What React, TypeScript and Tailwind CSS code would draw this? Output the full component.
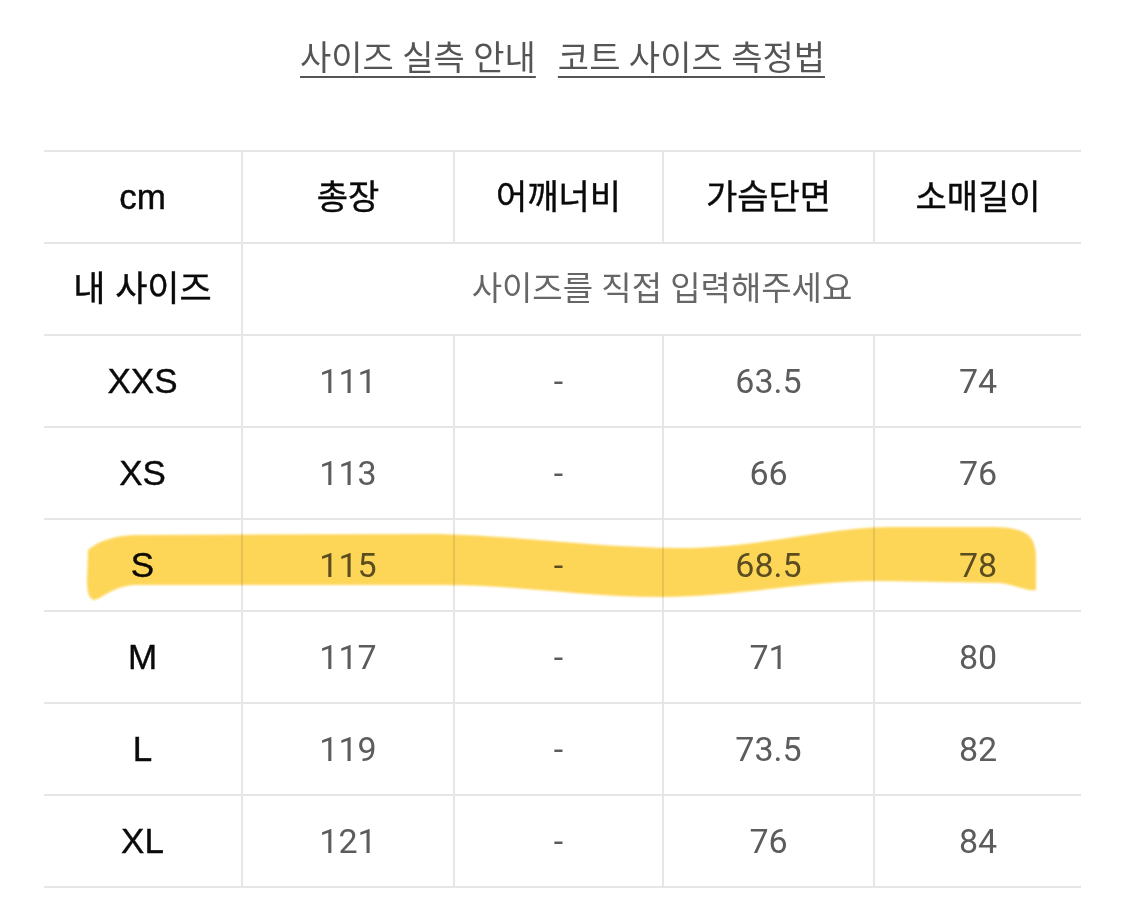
const rows = [
  { size: "XXS", values: ["111", "-", "63.5", "74"] },
  { size: "XS", values: ["113", "-", "66", "76"] },
  { size: "S", values: ["115", "-", "68.5", "78"] },
  { size: "M", values: ["117", "-", "71", "80"] },
  { size: "L", values: ["119", "-", "73.5", "82"] },
  { size: "XL", values: ["121", "-", "76", "84"] },
]

const headers = ["총장", "어깨너비", "가슴단면", "소매길이"]

const cols = "grid grid-cols-[197px_212px_209px_211px_208px]"
const cell = "flex items-center justify-center border-l-2 border-[#e6e6e6]"
const label =
  "flex items-center justify-center font-['Liberation_Sans','Noto_Sans_CJK_KR',sans-serif] text-[35px] text-[#0a0a0a] [-webkit-text-stroke:0.4px_#0a0a0a]"

function Highlight() {
  // yellow marker stroke drawn over the S row
  return (
    <svg
      className="pointer-events-none absolute left-0 top-0 mix-blend-multiply"
      width="1125"
      height="916"
      viewBox="0 0 1125 916"
    >
      <defs>
        <filter id="soft">
          <feGaussianBlur stdDeviation="1.2" />
        </filter>
      </defs>
      <path
        filter="url(#soft)"
        fill="#fdd659"
        d="M 88 550 C 100 540, 115 536, 135 535 L 440 534 C 520 536, 600 548, 680 548 C 760 548, 820 528, 890 527 L 995 527 C 1025 528, 1035 535, 1036 555 L 1036 590 C 1030 592, 1015 585, 1000 583 L 880 581 C 800 581, 740 597, 660 597 C 580 597, 520 585, 440 585 L 135 585 C 115 586, 105 596, 95 600 C 88 600, 87 590, 87 580 Z"
      />
    </svg>
  )
}

export default function App() {
  return (
    <div
      className="relative h-[916px] w-[1125px] bg-white"
      style={{ fontFamily: 'Roboto, "Noto Sans CJK KR", sans-serif' }}
    >
      <div className="flex h-[150px] justify-center gap-[22px] pt-[37px] text-[34px] leading-[42px] text-[#555]">
        <a className="underline decoration-2 underline-offset-[6px]">사이즈 실측 안내</a>
        <a className="underline decoration-2 underline-offset-[6px]">코트 사이즈 측정법</a>
      </div>

      <div className="ml-[44px] w-[1037px] border-b-2 border-[#e6e6e6] text-[34px]">
        <div className={`${cols} h-[92px] border-t-2 border-[#e6e6e6] text-[#0a0a0a] [-webkit-text-stroke:0.4px_#0a0a0a]`}>
          <div className={label}>cm</div>
          {headers.map((h) => (
            <div key={h} className={cell}>
              {h}
            </div>
          ))}
        </div>

        <div className="grid h-[92px] grid-cols-[197px_840px] border-t-2 border-[#e6e6e6]">
          <div className={label}>내 사이즈</div>
          <div className={`${cell} text-[33px] text-[#666]`}>사이즈를 직접 입력해주세요</div>
        </div>

        {rows.map((r) => (
          <div key={r.size} className={`${cols} h-[92px] border-t-2 border-[#e6e6e6]`}>
            <div className={label}>{r.size}</div>
            {r.values.map((v, i) => (
              <div key={i} className={`${cell} text-[#5c5c5c]`}>
                {v}
              </div>
            ))}
          </div>
        ))}
      </div>

      <Highlight />
    </div>
  )
}
